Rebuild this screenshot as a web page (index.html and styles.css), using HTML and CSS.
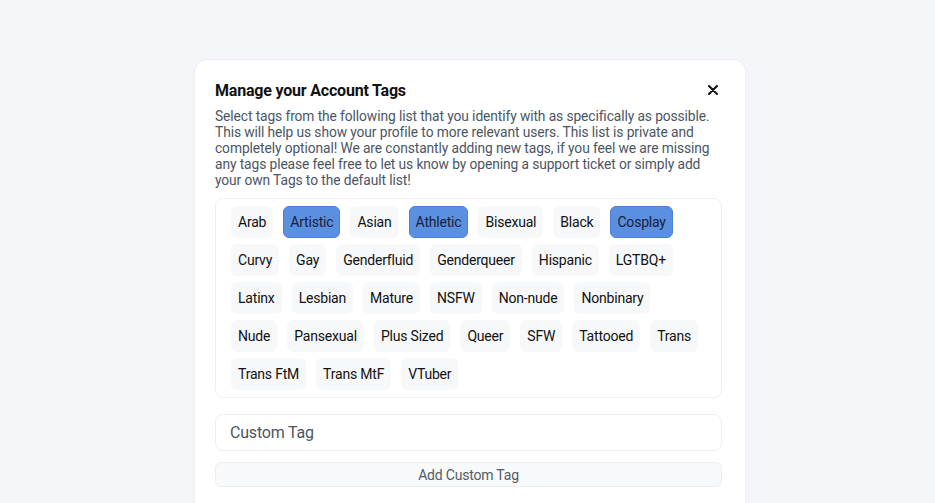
FILE: index.html
```html
<!DOCTYPE html>
<html>
<head>
<meta charset="utf-8">
<link rel="stylesheet" href="styles.css">
</head>
<body>
<div class="page">
  <div class="modal">
    <div class="header">
      <h2 class="title">Manage your Account Tags</h2>
      <button class="close" aria-label="Close">
        <svg width="10" height="10" viewBox="0 0 10 10"><path d="M1 1L9 9M9 1L1 9" stroke="#111" stroke-width="2" stroke-linecap="round"/></svg>
      </button>
    </div>
    <p class="desc">Select tags from the following list that you identify with as specifically as possible. This will help us show your profile to more relevant users. This list is private and completely optional! We are constantly adding new tags, if you feel we are missing any tags please feel free to let us know by opening a support ticket or simply add your own Tags to the default list!</p>
    <div class="tags">
      <span class="tag">Arab</span>
      <span class="tag on">Artistic</span>
      <span class="tag">Asian</span>
      <span class="tag on">Athletic</span>
      <span class="tag">Bisexual</span>
      <span class="tag">Black</span>
      <span class="tag on">Cosplay</span>
      <span class="tag">Curvy</span>
      <span class="tag">Gay</span>
      <span class="tag">Genderfluid</span>
      <span class="tag">Genderqueer</span>
      <span class="tag">Hispanic</span>
      <span class="tag">LGTBQ+</span>
      <span class="tag">Latinx</span>
      <span class="tag">Lesbian</span>
      <span class="tag">Mature</span>
      <span class="tag">NSFW</span>
      <span class="tag">Non-nude</span>
      <span class="tag">Nonbinary</span>
      <span class="tag">Nude</span>
      <span class="tag">Pansexual</span>
      <span class="tag">Plus Sized</span>
      <span class="tag">Queer</span>
      <span class="tag">SFW</span>
      <span class="tag">Tattooed</span>
      <span class="tag">Trans</span>
      <span class="tag">Trans FtM</span>
      <span class="tag">Trans MtF</span>
      <span class="tag">VTuber</span>
    </div>
    <div class="input">Custom Tag</div>
    <div class="btn">Add Custom Tag</div>
  </div>
</div>
</body>
</html>
```
FILE: styles.css
```css
html, body {
  margin: 0;
  padding: 0;
  height: 100%;
  overflow: hidden;
}
body {
  background: #f3f5f9;
  font-family: Roboto, "Liberation Sans", sans-serif;
  letter-spacing: -0.2px;
}
.page {
  display: flex;
  justify-content: center;
  padding-top: 60px;
  padding-left: 5px;
}
.modal {
  width: 550px;
  box-sizing: border-box;
  background: #fff;
  border-radius: 12px;
  padding: 20px 23px 40px 20px;
  box-shadow: 0 0 0 1px #eceef2;
}
.header {
  display: flex;
  align-items: center;
  justify-content: space-between;
  height: 20px;
}
.title {
  margin: 0;
  font-size: 16px;
  font-weight: 700;
  color: #111;
}
.close {
  border: 0;
  background: none;
  padding: 0;
  margin-right: 4px;
  width: 10px;
  height: 10px;
  display: flex;
  align-items: center;
  justify-content: center;
}
.desc {
  margin: 8px 0 10px;
  font-size: 13.8px;
  letter-spacing: -0.1px;
  line-height: 16px;
  color: #4b5563;
}
.tags {
  display: flex;
  flex-wrap: wrap;
  gap: 6px 10px;
  padding: 7px 15px 7px 15px;
  border: 1px solid #edeff3;
  border-radius: 8px;
}
.tag {
  height: 32px;
  box-sizing: border-box;
  padding: 0 6px;
  display: flex;
  align-items: center;
  font-size: 14px;
  color: #111;
  background: #f7f8fa;
  border: 1px solid #f7f8fa;
  border-radius: 6px;
}
.tag.on {
  background: #5b8fe0;
  border-color: #4a80d8;
  color: #15223a;
}
.input {
  margin-top: 16px;
  height: 37px;
  box-sizing: border-box;
  border: 1px solid #eceef2;
  border-radius: 8px;
  padding-left: 14px;
  display: flex;
  align-items: center;
  font-size: 16px;
  color: #4b5563;
}
.btn {
  margin-top: 11px;
  height: 25px;
  box-sizing: border-box;
  border: 1px solid #eceef2;
  border-radius: 6px;
  background: #f7f9fb;
  display: flex;
  align-items: center;
  justify-content: center;
  font-size: 14px;
  color: #555b63;
}
```
